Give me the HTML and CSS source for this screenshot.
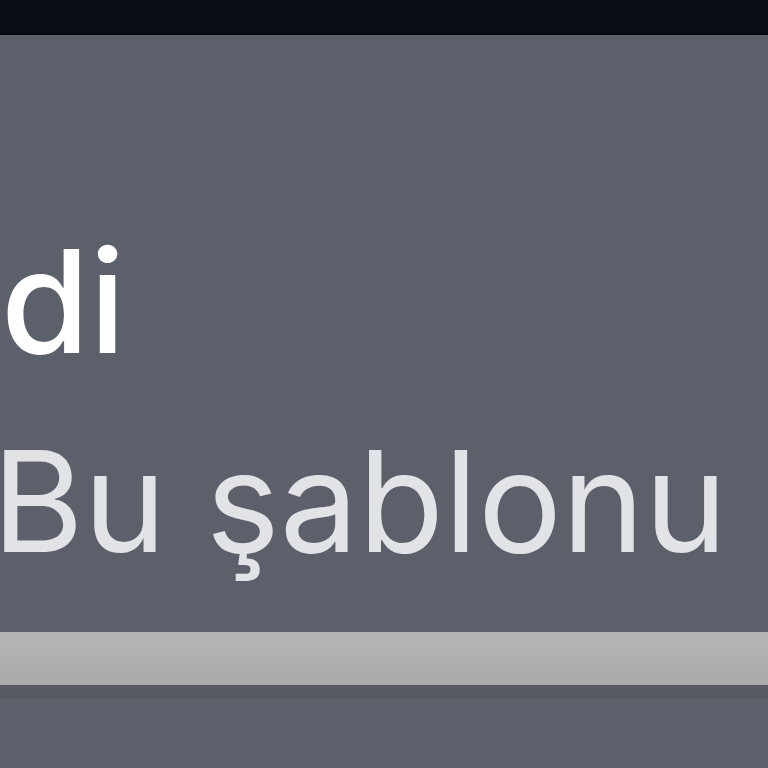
FILE: index.html
```html
<!DOCTYPE html>
<html lang="tr">
<head>
<meta charset="utf-8">
<link rel="stylesheet" href="styles.css">
</head>
<body>
<div class="topbar"></div>
<main class="sheet">
  <div class="title">di</div>
  <div class="subtitle">Bu şablonu</div>
  <div class="bar"></div>
  <div class="shade"></div>
</main>
</body>
</html>
```
FILE: styles.css
```css
html, body {
  margin: 0;
  padding: 0;
  background: #5c606a;
  overflow: hidden;
  width: 768px;
  height: 768px;
}
.topbar {
  height: 33px;
  background: #0b0e14;
  border-bottom: 2px solid #05070c;
}
.sheet {
  display: flex;
  flex-direction: column;
  padding-top: 166px;
  font-family: Inter, "Noto Sans", sans-serif;
  font-size: 140px;
  line-height: 200px;
  white-space: nowrap;
}
.title {
  color: #ffffff;
  font-size: 143px;
  font-weight: 500;
  margin-left: 1px;
}
.subtitle {
  color: #e2e3e7;
  font-size: 140px;
  margin-left: -8px;
}
.bar {
  margin-top: 31px;
  height: 53px;
  background: linear-gradient(#b5b5b8, #aaaaac);
}
.shade {
  height: 14px;
  background: #575a63;
}
```
